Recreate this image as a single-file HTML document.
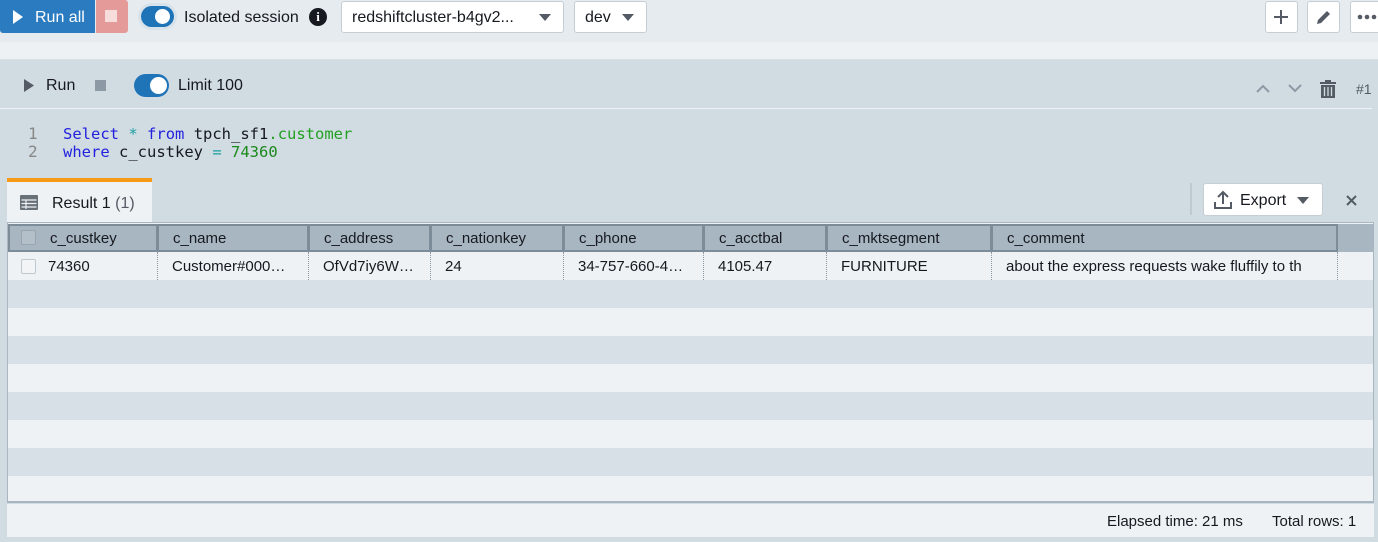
<!DOCTYPE html>
<html><head><meta charset="utf-8"><style>
*{box-sizing:border-box;margin:0;padding:0}
body{width:1378px;height:542px;overflow:hidden;background:#d1dbe2;font-family:"Liberation Sans",sans-serif;position:relative;color:#16191f}
.a{position:absolute}
.btn{position:absolute;background:#fff;border:1px solid #c6ced5;border-radius:3px}
.hd{position:absolute;top:224px;height:28px;background:#a8b6c2;border:2px solid #7d8c99;font-size:15px;line-height:26px;padding-left:14px;color:#16191f}
.cell{position:absolute;top:252px;height:28px;font-size:15px;line-height:30px;padding-left:14px;white-space:nowrap;overflow:hidden}
</style></head><body>
<div class="a" style="left:0;top:0;width:1378px;height:42px;background:#e6ebf0"></div>
<div class="a" style="left:0;top:42px;width:1378px;height:18px;background:#eef1f4;border-bottom:1px solid #d6dde3"></div>
<div class="a" style="left:0;top:0;width:95px;height:33px;background:#2a7bc0;border-radius:0 0 0 3px;color:#fff;font-size:16px;line-height:35px;padding-left:35px">Run all</div>
<svg class="a" style="left:12px;top:10px" width="12" height="14"><path d="M1 0L11 7L1 14Z" fill="#fff"/></svg>
<div class="a" style="left:96px;top:0;width:32px;height:33px;background:#e49a98;border-radius:0 3px 3px 0"></div>
<div class="a" style="left:105px;top:10px;width:12px;height:12px;background:#f6dcdb"></div>
<div class="a" style="left:138px;top:3px;width:39px;height:27px;border-radius:14px;background:#d8e2ea"></div>
<div class="a" style="left:141px;top:6px;width:33px;height:21px;border-radius:11px;background:#1f74b8"></div>
<div class="a" style="left:155px;top:9px;width:15px;height:15px;border-radius:50%;background:#fff"></div>
<div class="a" style="left:184px;top:9px;font-size:16px">Isolated session</div>
<div class="a" style="left:309px;top:8px;width:18px;height:18px;border-radius:50%;background:#16191f;color:#fff;font-size:13px;font-weight:bold;text-align:center;line-height:18px;font-family:'Liberation Serif',serif">i</div>
<div class="btn" style="left:341px;top:1px;width:223px;height:32px;font-size:16px;line-height:32px;padding-left:10px">redshiftcluster-b4gv2...</div>
<svg class="a" style="left:539px;top:14px" width="12" height="7"><path d="M0 0H12L6 7Z" fill="#545b64"/></svg>
<div class="btn" style="left:574px;top:1px;width:73px;height:32px;font-size:16px;line-height:32px;padding-left:10px">dev</div>
<svg class="a" style="left:622px;top:14px" width="12" height="7"><path d="M0 0H12L6 7Z" fill="#545b64"/></svg>
<div class="btn" style="left:1265px;top:1px;width:33px;height:32px"></div>
<svg class="a" style="left:1273px;top:9px" width="16" height="16"><path d="M8 1V15M1 8H15" stroke="#545b64" stroke-width="2"/></svg>
<div class="btn" style="left:1307px;top:1px;width:33px;height:32px"></div>
<svg class="a" style="left:1315px;top:9px" width="17" height="17"><path d="M2 15L3 11L12 2L15 5L6 14Z" fill="#545b64"/></svg>
<div class="btn" style="left:1350px;top:1px;width:40px;height:32px"></div>
<svg class="a" style="left:1357px;top:14px" width="20" height="6"><circle cx="3" cy="3" r="2.3" fill="#545b64"/><circle cx="10" cy="3" r="2.3" fill="#545b64"/><circle cx="17" cy="3" r="2.3" fill="#545b64"/></svg>
<svg class="a" style="left:24px;top:79px" width="10" height="13"><path d="M0 0L10 6.5L0 13Z" fill="#545b64"/></svg>
<div class="a" style="left:46px;top:77px;font-size:16px">Run</div>
<div class="a" style="left:95px;top:80px;width:11px;height:11px;background:#8d99a4"></div>
<div class="a" style="left:134px;top:74px;width:35px;height:23px;border-radius:12px;background:#1f74b8"></div>
<div class="a" style="left:150px;top:77px;width:17px;height:17px;border-radius:50%;background:#fff"></div>
<div class="a" style="left:178px;top:77px;font-size:16px">Limit 100</div>
<svg class="a" style="left:1256px;top:84px" width="14" height="9"><path d="M1 8L7 2L13 8" stroke="#8d99a4" stroke-width="2" fill="none"/></svg>
<svg class="a" style="left:1288px;top:84px" width="14" height="9"><path d="M1 1L7 7L13 1" stroke="#8d99a4" stroke-width="2" fill="none"/></svg>
<svg class="a" style="left:1320px;top:79px" width="16" height="19"><path d="M5 1H11V3H16V5H0V3H5Z" fill="#545b64"/><path d="M1 6H15V19H1Z" fill="#545b64"/><path d="M4.5 8V17M8 8V17M11.5 8V17" stroke="#d1dbe2" stroke-width="1.3"/></svg>
<div class="a" style="left:1356px;top:81px;font-size:14px;color:#545b64">#1</div>
<div class="a" style="left:0;top:108px;width:1372px;height:1px;background:#eef2f5"></div>
<div class="a" style="left:28px;top:125px;font-family:'DejaVu Sans Mono','Liberation Mono',monospace;font-size:16px;line-height:18px;color:#888">1<br>2</div>
<div class="a" style="left:63px;top:125px;font-family:'DejaVu Sans Mono','Liberation Mono',monospace;font-size:15.5px;line-height:18px;white-space:pre;color:#16191f"><span style="color:#2222dd">Select</span> <span style="color:#1aa0a0">*</span> <span style="color:#2222dd">from</span> tpch_sf1<span style="color:#22a022">.customer</span>
<span style="color:#2222dd">where</span> c_custkey <span style="color:#1aa0a0">=</span> <span style="color:#1a8a1a">74360</span></div>
<div class="a" style="left:7px;top:178px;width:145px;height:45px;background:#eef2f5;border-top:4px solid #f79b16"></div>
<svg class="a" style="left:20px;top:195px" width="18" height="15"><rect x="0" y="0" width="18" height="15" rx="1" fill="#687078"/><path d="M1.5 5H16.5M1.5 8.5H16.5M1.5 12H16.5M6 5V14" stroke="#eef2f5" stroke-width="1.2"/></svg>
<div class="a" style="left:52px;top:195px;font-size:16px">Result 1 <span style="color:#545b64">(1)</span></div>
<div class="a" style="left:1190px;top:183px;width:2px;height:32px;background:#bfc9d1"></div>
<div class="btn" style="left:1203px;top:183px;width:120px;height:33px;font-size:16px;line-height:33px;padding-left:36px">Export</div>
<svg class="a" style="left:1213px;top:190px" width="20" height="20"><path d="M10 14V2M5 7L10 2L15 7M2 12V18H18V12" stroke="#545b64" stroke-width="2" fill="none"/></svg>
<svg class="a" style="left:1297px;top:197px" width="12" height="7"><path d="M0 0H12L6 7Z" fill="#545b64"/></svg>
<svg class="a" style="left:1346px;top:195px" width="11" height="11"><path d="M1 1L10 10M10 1L1 10" stroke="#545b64" stroke-width="2"/></svg>
<div class="a" style="left:7px;top:222px;width:1367px;height:281px;background:#eef2f5;border:1px solid #a8b6c2;border-bottom:2px solid #a8b6c2"></div>
<div class="a" style="left:8px;top:224px;width:1365px;height:28px;background:#c9d3db"></div>
<div class="a" style="left:8px;top:280px;width:1365px;height:28px;background:#d8e0e7"></div>
<div class="a" style="left:8px;top:336px;width:1365px;height:28px;background:#d8e0e7"></div>
<div class="a" style="left:8px;top:392px;width:1365px;height:28px;background:#d8e0e7"></div>
<div class="a" style="left:8px;top:448px;width:1365px;height:28px;background:#d8e0e7"></div>
<div class="hd" style="left:8px;width:150px;padding-left:40px">c_custkey</div>
<div class="a" style="left:21px;top:230px;width:15px;height:15px;border:1px solid #98a4ae;background:#b3c0ca;border-radius:2px"></div>
<div class="hd" style="left:157px;width:152px">c_name</div>
<div class="hd" style="left:308px;width:123px">c_address</div>
<div class="hd" style="left:430px;width:134px">c_nationkey</div>
<div class="hd" style="left:563px;width:141px">c_phone</div>
<div class="hd" style="left:703px;width:124px">c_acctbal</div>
<div class="hd" style="left:826px;width:166px">c_mktsegment</div>
<div class="hd" style="left:991px;width:347px">c_comment</div>
<div class="a" style="left:1338px;top:224px;width:35px;height:28px;background:#a8b6c2"></div>
<div class="a" style="left:21px;top:259px;width:15px;height:15px;border:1px solid #c0c8cf;background:#f2f4f6;border-radius:2px"></div>
<div class="cell" style="left:34px;width:120px">74360</div>
<div class="cell" style="left:157px;width:150px;border-left:1px dotted #8c99a5">Customer#000…</div>
<div class="cell" style="left:308px;width:122px;border-left:1px dotted #8c99a5">OfVd7iy6W…</div>
<div class="cell" style="left:430px;width:133px;border-left:1px dotted #8c99a5">24</div>
<div class="cell" style="left:563px;width:140px;border-left:1px dotted #8c99a5">34-757-660-4…</div>
<div class="cell" style="left:703px;width:123px;border-left:1px dotted #8c99a5">4105.47</div>
<div class="cell" style="left:826px;width:165px;border-left:1px dotted #8c99a5">FURNITURE</div>
<div class="cell" style="left:991px;width:347px;border-left:1px dotted #8c99a5;border-right:1px dotted #8c99a5">about the express requests wake fluffily to th</div>
<div class="a" style="left:7px;top:504px;width:1367px;height:33px;background:#eef2f5"></div>
<div class="a" style="left:1107px;top:513px;font-size:15px">Elapsed time: 21 ms</div>
<div class="a" style="left:1272px;top:513px;font-size:15px">Total rows: 1</div>
</body></html>
